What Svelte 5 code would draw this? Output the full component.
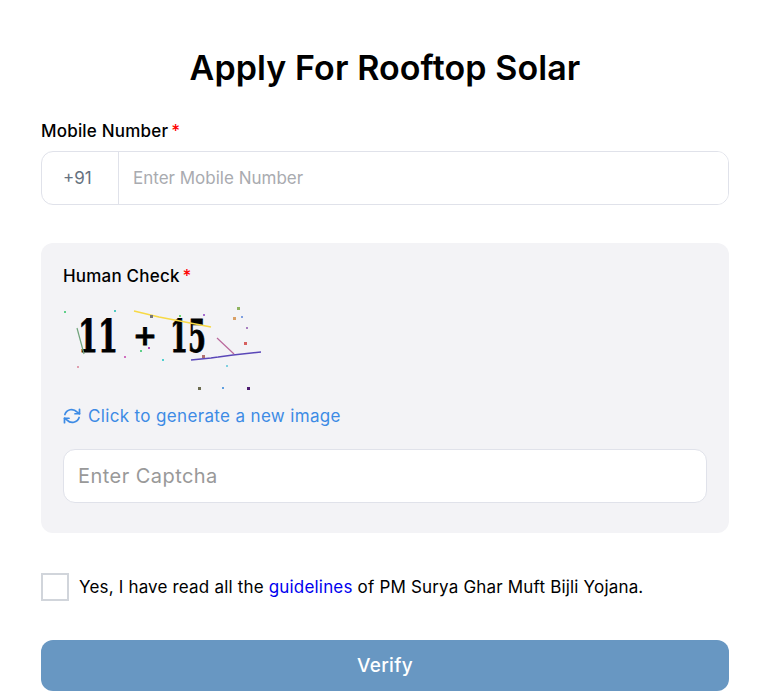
<script lang="ts">
    let mobile = $state('');
    let captcha = $state('');
    let agreed = $state(false);

    // specks of noise on the captcha image: x, y, size, colour
    const specks: [number, number, number, string][] = [
        [1, 11, 2, '#5fd08a'], [51, 10, 2, '#4fc9c0'], [87, 15, 3, '#777'], [116, 15, 2, '#6fd66f'],
        [140, 14, 2, '#a66fd0'], [174, 7, 3, '#8fb35f'], [170, 17, 3, '#d9a066'], [178, 16, 2, '#7f9fe0'],
        [183, 27, 2, '#a77fc0'], [181, 42, 3, '#d66060'], [77, 50, 2, '#5fd08a'], [85, 47, 2, '#b04fc0'],
        [61, 56, 2, '#d070c0'], [99, 59, 2, '#4fd0d0'], [14, 66, 2, '#e0a0b0'], [139, 55, 3, '#b07070'],
        [163, 65, 2, '#80d0e0'], [135, 87, 3, '#6b6b50'], [159, 87, 2, '#5f9fe0'], [184, 87, 3, '#4b1a70']
    ];
</script>

<main class="page">
    <h1>Apply For Rooftop Solar</h1>

    <label class="field-label" for="mobile">Mobile Number<span class="req">*</span></label>
    <div class="phone">
        <span class="prefix">+91</span>
        <input id="mobile" type="text" placeholder="Enter Mobile Number" bind:value={mobile} />
    </div>

    <section class="human">
        <label class="field-label" for="captcha">Human Check<span class="req">*</span></label>
        <svg class="captcha-img" width="200" height="95" viewBox="0 0 200 95" aria-label="captcha">
            <text x="15" y="52" class="captcha-text" textLength="40" lengthAdjust="spacingAndGlyphs">11</text>
            <text x="70" y="45" class="captcha-text plus" textLength="24" lengthAdjust="spacingAndGlyphs">+</text>
            <text x="107" y="52" class="captcha-text" textLength="36" lengthAdjust="spacingAndGlyphs">15</text>
            <polyline points="71,11 96,17 122,22 148,27" fill="none" stroke="#f7d945" stroke-width="1.5" />
            <polyline points="128,60 148,58 170,55 198,52" fill="none" stroke="#5a47b8" stroke-width="1.5" />
            <line x1="154" y1="38" x2="171" y2="54" stroke="#b9679b" stroke-width="1.2" />
            <line x1="14" y1="28" x2="21" y2="54" stroke="#6fa27a" stroke-width="1.2" />
            {#each specks as [x, y, size, colour]}
                <rect {x} {y} width={size} height={size} fill={colour} />
            {/each}
        </svg>
        <button class="refresh" type="button">
            <svg width="18" height="18" viewBox="0 0 24 24" fill="none" stroke="currentColor" stroke-width="2.3" stroke-linecap="round" stroke-linejoin="round">
                <path d="M22 3v6h-6" />
                <path d="M2 21v-6h6" />
                <path d="M2.5 10a9.5 9.5 0 0 1 16-3.5L22 9M2 15l3.5 2.5A9.5 9.5 0 0 0 21.5 14" />
            </svg>
            <span>Click to generate a new image</span>
        </button>
        <input class="captcha-input" id="captcha" type="text" placeholder="Enter Captcha" bind:value={captcha} />
    </section>

    <div class="consent">
        <input type="checkbox" bind:checked={agreed} />
        <span>Yes, I have read all the <a href="#guidelines">guidelines</a> of PM Surya Ghar Muft Bijli Yojana.</span>
    </div>

    <button class="verify" type="button">Verify</button>
</main>

<style>
    :global(body) {
        background: #fff;
    }

    .page {
        box-sizing: border-box;
        height: 698px;
        overflow: hidden;
        padding: 45px 30px 0 41px;
        font-family: Inter, "Open Sans", sans-serif;
        color: #000;
    }

    h1 {
        margin: 0 0 28px;
        text-align: center;
        font-size: 34px;
        line-height: 46px;
        font-weight: 600;
        letter-spacing: 0.1px;
    }

    .field-label {
        display: block;
        font-size: 17px;
        line-height: 24px;
        font-weight: 500;
        letter-spacing: 0.2px;
        margin-bottom: 8px;
    }

    .req {
        color: #f00;
        margin-left: 3px;
    }

    .phone {
        display: flex;
        height: 54px;
        box-sizing: border-box;
        border: 1px solid #e0e2ea;
        border-radius: 12px;
        overflow: hidden;
    }

    .prefix {
        box-sizing: border-box;
        width: 77px;
        flex: none;
        display: flex;
        align-items: center;
        padding-left: 21px;
        border-right: 1px solid #e0e2ea;
        color: #667180;
        font-size: 17px;
    }

    input[type='text'] {
        font-family: inherit;
        outline: none;
        border: none;
        background: #fff;
        color: #222;
    }

    input::placeholder {
        color: #a9abb0;
        opacity: 1;
    }

    .phone input {
        flex: 1;
        min-width: 0;
        padding: 0 14px;
        font-size: 17px;
    }

    .human {
        margin-top: 38px;
        box-sizing: border-box;
        height: 290px;
        padding: 21px 22px;
        background: #f3f3f6;
        border-radius: 12px;
    }

    .human .field-label {
        margin-bottom: 0;
    }

    .captcha-img {
        display: block;
        margin-top: 12px;
    }

    .captcha-text {
        font-family: "DejaVu Serif", serif;
        font-weight: 700;
        font-size: 44px;
        fill: #000;
        stroke: #000;
        stroke-width: 0.8px;
    }

    .captcha-text.plus {
        font-size: 28px;
    }

    .refresh {
        display: flex;
        align-items: center;
        gap: 7px;
        margin-top: 8px;
        padding: 0;
        border: none;
        background: none;
        font-family: inherit;
        font-size: 17px;
        line-height: 26px;
        letter-spacing: 0.35px;
        color: #3d8be5;
    }

    input.captcha-input {
        display: block;
        width: 100%;
        box-sizing: border-box;
        height: 54px;
        margin-top: 20px;
        padding: 0 14px;
        border: 1px solid #e0e2ea;
        border-radius: 12px;
        font-size: 20px;
        letter-spacing: 0.45px;
    }

    .captcha-input::placeholder {
        color: #999;
    }

    .consent {
        display: flex;
        align-items: center;
        gap: 10px;
        margin-top: 40px;
        font-size: 17px;
        line-height: 28px;
        letter-spacing: 0.18px;
    }

    .consent input {
        appearance: none;
        flex: none;
        box-sizing: border-box;
        width: 28px;
        height: 28px;
        margin: 0;
        border: 2px solid #d1d5db;
        background: #fff;
    }

    .consent a {
        color: #00e;
        text-decoration: none;
    }

    .verify {
        display: block;
        width: 100%;
        height: 51px;
        margin-top: 39px;
        border: none;
        border-radius: 12px;
        background: #6897c2;
        color: #fff;
        font-family: inherit;
        font-size: 19px;
        font-weight: 500;
        letter-spacing: 0.3px;
    }
</style>
